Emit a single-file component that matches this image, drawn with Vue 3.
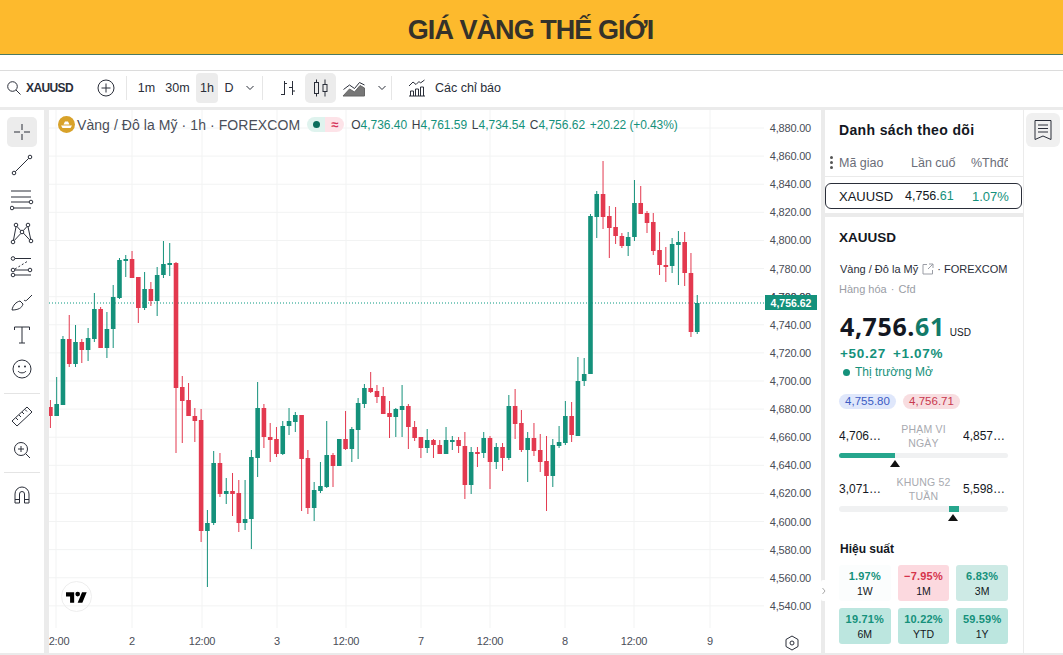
<script setup>
// [up, bodyTop, bodyBottom, wickTop, wickBottom]
const raw = [
  [0,407,416,400,428],[1,404,416,377,416],[1,339,405,336,405],[0,339,364,315,367],[1,342,364,325,367],
  [0,342,350,339,363],[1,338,350,328,361],[1,309,339,293,342],[0,309,348,307,348],[1,329,348,312,358],
  [1,297,329,285,348],[1,260,298,258,299],[1,259,261,255,277],[0,259,278,251,278],[0,277,308,277,323],
  [1,289,308,272,310],[0,289,301,282,306],[1,275,301,267,316],[1,264,275,241,278],[1,263,264,243,276],
  [0,263,388,262,453],[0,387,401,376,443],[0,400,416,383,416],[0,416,421,408,442],[0,420,531,409,542],
  [1,523,531,510,587],[1,463,523,451,525],[0,463,494,453,497],[1,491,494,478,504],[0,491,494,473,516],
  [0,493,523,480,532],[1,519,523,480,530],[1,457,519,450,549],[1,408,458,382,477],[0,408,437,404,448],
  [0,437,440,423,462],[0,439,454,427,457],[1,426,454,421,455],[1,421,426,408,435],[1,415,422,412,432],
  [0,415,459,415,511],[0,458,508,450,514],[1,490,508,482,521],[1,486,491,462,493],[1,455,487,421,488],
  [0,455,466,453,487],[1,439,466,439,466],[0,439,449,411,450],[1,429,449,427,462],[1,403,430,398,459],
  [1,388,404,384,408],[0,388,392,372,393],[0,391,397,385,403],[0,396,414,387,414],[0,413,417,401,438],
  [1,409,417,408,437],[1,406,410,385,437],[0,406,427,404,449],[0,427,438,421,441],[0,437,448,437,458],
  [1,440,448,429,453],[0,440,445,439,458],[0,445,454,440,454],[1,440,454,427,454],[1,440,441,436,450],
  [0,440,446,437,453],[0,446,485,432,499],[1,452,485,447,494],[0,452,454,447,467],[1,438,453,432,458],
  [0,438,462,436,489],[1,447,462,443,469],[0,447,458,443,471],[1,406,458,395,460],[0,406,424,389,439],
  [0,423,450,410,452],[1,438,450,432,482],[0,438,451,423,456],[0,450,462,434,472],[0,461,476,436,511],
  [1,445,476,439,487],[1,442,446,426,448],[1,416,443,401,445],[0,416,435,402,442],[1,381,436,357,436],
  [1,374,381,358,386],[1,216,374,214,374],[1,194,217,191,238],[0,194,217,161,229],[0,216,228,206,258],
  [0,227,236,207,244],[0,236,246,233,248],[1,237,246,232,256],[1,203,237,180,241],[0,203,214,186,214],
  [0,213,223,211,233],[0,222,251,213,255],[0,250,265,232,275],[0,265,266,247,282],[1,244,266,238,273],
  [1,242,245,231,285],[0,242,273,232,286],[0,273,332,253,337],[1,303,332,295,334]
]

// chart svg starts at x=49, y=110
const candles = raw.map((c, i) => ({
  x: 6.28 * i + 1.4,
  up: c[0] === 1,
  top: c[1] - 110,
  h: Math.max(c[2] - c[1], 2),
  wickTop: c[3] - 110,
  wickBottom: c[4] - 110
}))

const prices = []
for (let i = 0; i < 18; i++) {
  const value = 4880 - i * 20
  prices.push({ y: 18 + i * 28.11, label: value.toLocaleString('en-US') + '.00' })
}

const times = [
  { x: 7, label: '2:00' }, { x: 83, label: '2' }, { x: 153, label: '12:00' }, { x: 228, label: '3' },
  { x: 297, label: '12:00' }, { x: 372, label: '7' }, { x: 441, label: '12:00' }, { x: 516, label: '8' },
  { x: 585, label: '12:00' }, { x: 661, label: '9' }
]

const perf = [
  { v: '1.97%', p: '1W', c: 'p-none' }, { v: '−7.95%', p: '1M', c: 'p-red' }, { v: '6.83%', p: '3M', c: 'p-light' },
  { v: '19.71%', p: '6M', c: 'p-mid' }, { v: '10.22%', p: 'YTD', c: 'p-mid' }, { v: '59.59%', p: '1Y', c: 'p-mid' }
]
</script>

<template>
  <div class="page">
    <header class="banner">GIÁ VÀNG THẾ GIỚI</header>
    <div class="spacer"></div>

    <div class="toolbar">
      <svg class="ic search" width="16" height="16" viewBox="0 0 16 16"><circle cx="6.5" cy="6.5" r="4.8"/><path d="M10 10l4.5 4.5"/></svg>
      <span class="sym">XAUUSD</span>
      <svg class="ic plus" width="20" height="20" viewBox="0 0 20 20"><circle cx="10" cy="10" r="8"/><path d="M10 5.5v9M5.5 10h9"/></svg>
      <i class="sep s1"></i>
      <span class="tf t1">1m</span>
      <span class="tf t2">30m</span>
      <span class="tf t3">1h</span>
      <span class="tf t4">D</span>
      <svg class="ic chev c1" width="10" height="6" viewBox="0 0 10 6"><path d="M1.5 1l3.5 3.5L8.5 1"/></svg>
      <i class="sep s2"></i>
      <svg class="ic bars" width="18" height="20" viewBox="0 0 18 20"><path d="M6.500 3v14M3 16.500h3.500M6.500 5.500H9M14.500 3v14M11 9.500h3.500M14.500 13H17"/></svg>
      <span class="type-on">
        <svg class="ic" width="18" height="20" viewBox="0 0 18 20"><rect x="2.500" y="4.500" width="4" height="11"/><path d="M4.500 1.500v3M4.500 15.500v3M13 1.500v5M13 13.500v5"/><rect x="11" y="6.500" width="4" height="7"/></svg>
      </span>
      <svg class="ic area" width="24" height="20" viewBox="0 0 24 20"><path d="M1.500 11.500l6-4.500 5 3.500 5-6 5 2.500"/><path class="hatch" d="M1 18l6.500-7 5 3 5.500-6.500 4.500 2.500v8z"/></svg>
      <svg class="ic chev c2" width="10" height="6" viewBox="0 0 10 6"><path d="M1.500 1l3.500 3.500L8.500 1"/></svg>
      <i class="sep s3"></i>
      <svg class="ic indi" width="20" height="20" viewBox="0 0 20 20"><path d="M2 8l4-4 3 2.500 3-3 1.500 1.500 4-3"/><path d="M2 18h16M3.500 18v-5h3v5M8.500 18v-7h3v7M13.500 18v-9h3v9"/></svg>
      <span class="ind-label">Các chỉ báo</span>
    </div>

    <div class="body">
      <aside class="tools">
        <span class="tool on"><svg class="ic" width="24" height="24" viewBox="0 0 24 24"><path d="M12 4v6M12 14v6M4 12h6M14 12h6"/></svg></span>
        <span class="tool"><svg class="ic" width="24" height="24" viewBox="0 0 24 24"><circle cx="4" cy="20" r="1.800"/><circle cx="20" cy="4" r="1.800"/><path d="M5.300 18.700L18.700 5.300"/></svg></span>
        <span class="tool"><svg class="ic" width="24" height="24" viewBox="0 0 24 24"><path d="M1 4h20M1 10h20M1 15h18M4 21h17"/><circle cx="21" cy="15" r="1.800"/><circle cx="2" cy="21" r="1.800"/></svg></span>
        <span class="tool"><svg class="ic" width="24" height="24" viewBox="0 0 24 24"><circle cx="6" cy="4" r="1.800"/><circle cx="18" cy="4" r="1.800"/><circle cx="12" cy="11" r="1.800"/><circle cx="3" cy="21" r="1.800"/><circle cx="21" cy="20" r="1.800"/><path d="M7 5.500l3.800 4.200M17 5.500l-3.800 4.200M6 5.800L3.500 19M18 5.800l2.700 12.500M4.300 19.500l6.500-7M19.600 18.800l-6.300-6.800"/></svg></span>
        <span class="tool"><svg class="ic" width="24" height="24" viewBox="0 0 24 24"><circle cx="3" cy="3.500" r="1.800"/><circle cx="3" cy="15" r="1.800"/><circle cx="3" cy="20" r="1.800"/><circle cx="20" cy="15" r="1.800"/><path d="M5 3.500h16M5 20h16M5 15h13"/><path stroke-dasharray="2 2" d="M5 14l13-8"/></svg></span>
        <span class="tool"><svg class="ic" width="24" height="24" viewBox="0 0 24 24"><path d="M2 21c1-5 4-8 8-9l3 3c-1 4-5 6-11 6zM14 11c1 1 2 1 3 0l5-5"/></svg></span>
        <span class="tool"><svg class="ic" width="24" height="24" viewBox="0 0 24 24"><path d="M4.500 7V4h15v3M12 4v16M9 20h6"/></svg></span>
        <span class="tool"><svg class="ic" width="24" height="24" viewBox="0 0 24 24"><circle cx="12" cy="12" r="9"/><path d="M8 14c1.500 2.500 6.500 2.500 8 0"/><circle class="dot" cx="9" cy="9.500" r="1"/><circle class="dot" cx="15" cy="9.500" r="1"/></svg></span>
        <i class="tool-sep first"></i>
        <span class="tool"><svg class="ic" width="24" height="24" viewBox="0 0 24 24"><path d="M2 17L17 3l5 5L7 22zM6 14l2 2M9 11l2 2M12 8l2 2M15 5.500l2 2"/></svg></span>
        <span class="tool"><svg class="ic" width="24" height="24" viewBox="0 0 24 24"><circle cx="11" cy="11" r="6.500"/><path d="M11 8v6M8 11h6M15.800 15.800L20 20"/></svg></span>
        <i class="tool-sep"></i>
        <span class="tool"><svg class="ic" width="24" height="24" viewBox="0 0 24 24"><path d="M5 20V11a7 7 0 0 1 14 0v9h-4.500v-9a2.500 2.500 0 0 0-5 0v9zM5 16.500h4.500M14.500 16.500H19"/></svg></span>
      </aside>

      <main class="chart">
        <svg class="plot" width="772" height="543" viewBox="0 0 772 543">
          <g class="grid">
            <line v-for="p in prices" :key="p.y" x1="0" x2="715" :y1="p.y" :y2="p.y"/>
            <line v-for="t in times" :key="t.x" :x1="t.x" :x2="t.x" y1="0" y2="518"/>
          </g>
          <line class="last" x1="0" x2="716" y1="193" y2="193"/>
          <g v-for="(c, i) in candles" :key="i" :class="c.up ? 'up' : 'down'">
            <line :x1="c.x" :x2="c.x" :y1="c.wickTop" :y2="c.wickBottom"/>
            <rect :x="c.x - 2.300" :y="c.top" width="4.600" :height="c.h"/>
          </g>
          <text v-for="p in prices" :key="p.label" class="tick" x="762" text-anchor="end" :y="p.y + 4">{{ p.label }}</text>
          <text class="tick" x="762" text-anchor="end" y="191">4,760.00</text>
          <rect class="tag" x="716" y="185" width="52" height="15"/>
          <text class="tag-text" x="742" y="196.500" text-anchor="middle">4,756.62</text>
          <text v-for="t in times" :key="t.label + t.x" class="tick" :x="t.x + (t.label === '2:00' ? 3 : 0)" y="535" text-anchor="middle">{{ t.label }}</text>
          <g class="ic" transform="translate(736 525)">
            <path d="M7 1l6 3.500v7L7 15l-6-3.500v-7z"/><circle cx="7" cy="8" r="2"/>
          </g>
        </svg>

        <div class="legend">
          <svg width="17" height="17" viewBox="0 0 17 17"><circle cx="8.500" cy="8.500" r="8.500" fill="#d8a22a"/><path d="M3 9.500h11l-1.500 2.500h-8zM5.500 8.500l1.500-3h3l1.500 3z" fill="#fff"/></svg>
          <span class="l-name">Vàng / Đô la Mỹ · 1h · FOREXCOM</span>
          <span class="status"><b class="s-dot"></b><b class="s-eq">≈</b></span>
          <span class="ohlc">O<em>4,736.40</em></span>
          <span class="ohlc">H<em>4,761.59</em></span>
          <span class="ohlc">L<em>4,734.54</em></span>
          <span class="ohlc">C<em>4,756.62</em></span>
          <span class="ohlc change"><em>+20.22 (+0.43%)</em></span>
        </div>

        <div class="tv-logo">
          <svg width="21" height="14" viewBox="0 0 36 24"><path d="M14 22H7V11H0V4h14v18zM28 22h-8l7.500-18h8L28 22z"/><circle cx="20" cy="7" r="4"/></svg>
        </div>
        <div class="collapse"><svg class="ic" width="4" height="8" viewBox="0 0 4 8"><path d="M.5 1l2.500 3L.5 7"/></svg></div>
      </main>

      <section class="side">
        <div class="card watch">
          <h2>Danh sách theo dõi</h2>
          <div class="wl-head">
            <span class="dots"><i></i><i></i><i></i></span>
            <span class="wh1">Mã giao</span><span class="wh2">Lần cuối</span><span class="wh3">%Thđổi</span>
          </div>
          <div class="wl-row">
            <span class="wr1">XAUUSD</span>
            <span class="wr2">4,756.<em>61</em></span>
            <span class="wr3">1.07%</span>
          </div>
        </div>

        <div class="card detail">
          <h3>XAUUSD</h3>
          <div class="d-name">
            <span>Vàng / Đô la Mỹ</span>
            <svg class="ext" width="12" height="12" viewBox="0 0 12 12"><path d="M5 1.500H1v9.500h9.500V7M7 1h4v4M11 1L6 6"/></svg>
            <span class="d-dot">·</span>
            <span>FOREXCOM</span>
          </div>
          <div class="d-type">Hàng hóa <span>·</span> Cfd</div>
          <div class="d-price">4,756.<em>61</em><small>USD</small></div>
          <div class="d-change">+50.27<span>+1.07%</span></div>
          <div class="d-open"><i></i>Thị trường Mở</div>
          <div class="pills"><span class="bid">4,755.80</span><span class="ask">4,756.71</span></div>

          <div class="range">
            <span class="r-val">4,706.61</span>
            <span class="r-label">PHẠM VI NGÀY</span>
            <span class="r-val">4,857.50</span>
          </div>
          <div class="bar"><i class="fill day"></i></div>
          <div class="tri-row"><i class="tri day"></i></div>

          <div class="range r2">
            <span class="r-val">3,071.02</span>
            <span class="r-label">KHUNG 52 TUẦN</span>
            <span class="r-val">5,598.75</span>
          </div>
          <div class="bar tall"><i class="fill year"></i></div>
          <div class="tri-row"><i class="tri year"></i></div>

          <h4>Hiệu suất</h4>
          <div class="perf">
            <div v-for="item in perf" :key="item.p" class="perf-item" :class="item.c">
              <b>{{ item.v }}</b>
              <span>{{ item.p }}</span>
            </div>
          </div>
        </div>
      </section>

      <aside class="rail">
        <span class="rail-btn">
          <svg class="ic" width="20" height="22" viewBox="0 0 20 22"><path d="M2 1.500h16v19l-8-3.500-8 3.500zM5 6h10M5 9.500h10M5 13h10"/></svg>
        </span>
      </aside>
    </div>
  </div>
</template>

<style scoped>
.page {
  width: 1063px;
  height: 655px;
  display: flex;
  flex-direction: column;
  overflow: hidden;
  font-family: "Liberation Sans", Arial, sans-serif;
  color: #131722;
  background: #fff;
}
.banner {
  height: 55px;
  flex: none;
  box-sizing: border-box;
  background: #fdba2d;
  border-bottom: 1px solid #4c7a62;
  text-align: center;
  line-height: 60px;
  font-size: 27px;
  font-weight: 700;
  letter-spacing: -0.95px;
  color: #35322a;
  padding-right: 2px;
}
.spacer {
  height: 15px;
  flex: none;
  border-bottom: 1px solid #dcdcdc;
}
.ic {
  fill: none;
  stroke: #2a2e39;
  stroke-width: 1;
}
.ic .dot {
  fill: #2a2e39;
  stroke: none;
}
.toolbar {
  height: 36px;
  flex: none;
  box-sizing: border-box;
  padding-bottom: 3px;
  display: flex;
  align-items: center;
  font-size: 12.5px;
  color: #2a2e39;
}
.search { margin-left: 6px; }
.sym {
  margin-left: 4px;
  font-size: 12px;
  font-weight: 700;
  letter-spacing: -0.6px;
  width: 70px;
}
.plus { margin-right: 10px; }
.sep {
  width: 1px;
  height: 24px;
  background: #e6e6e6;
}
.tf {
  font-size: 12.5px;
  text-align: center;
}
.t1 { margin-left: 10px; width: 19px; }
.t2 { margin-left: 9px; width: 25px; }
.t3 {
  margin-left: 6px;
  width: 22px;
  height: 30px;
  line-height: 30px;
  background: #ececec;
  border-radius: 4px;
}
.t4 { margin-left: 6px; width: 10px; }
.c1 { margin-left: 11px; }
.s2 { margin-left: 7px; }
.bars { margin-left: 15px; }
.type-on {
  margin-left: 9px;
  width: 31px;
  height: 30px;
  background: #ececec;
  border-radius: 5px;
  display: flex;
  align-items: center;
  justify-content: center;
}
.area { margin-left: 6px; }
.hatch {
  fill: #777;
  stroke: #666;
}
.c2 { margin-left: 11px; }
.s3 { margin-left: 4px; }
.indi { margin-left: 15px; }
.ind-label {
  margin-left: 8px;
  font-size: 12.5px;
}

.body {
  flex: 1;
  min-height: 0;
  display: flex;
  background: #ebebeb;
  padding: 3px 0 2px;
}
.tools {
  width: 44px;
  flex: none;
  background: #fff;
  display: flex;
  flex-direction: column;
  align-items: center;
  padding-top: 4px;
  margin-right: 5px;
}
.tool {
  width: 30px;
  height: 34px;
  display: flex;
  align-items: center;
  justify-content: center;
  flex: none;
}
.tool.on {
  background: #ececec;
  border-radius: 5px;
  height: 30px;
  margin: 3px 0 1px;
}
.tool-sep {
  width: 36px;
  height: 1px;
  background: #e4e4e4;
  margin: 5px 0 5px;
  flex: none;
}
.tool-sep.first { margin-top: 7px; margin-bottom: 5px; }

.chart {
  width: 772px;
  flex: none;
  background: #fff;
  position: relative;
}
.plot { display: block; }
.grid line {
  stroke: #f2f3f3;
  stroke-width: 1;
}
.last {
  stroke: #089981;
  stroke-width: 1;
  stroke-dasharray: 1 2;
}
.up line { stroke: #14917b; }
.up rect { fill: #14917b; }
.down line { stroke: #e3394f; }
.down rect { fill: #e3394f; }
.tick {
  font-size: 11px;
  letter-spacing: -0.2px;
  fill: #4a4e58;
  font-family: "Liberation Sans", Arial, sans-serif;
}
.tag { fill: #14917b; }
.tag-text {
  font-size: 10.5px;
  font-weight: 700;
  fill: #fff;
}
.legend {
  position: absolute;
  left: 9px;
  top: 6px;
  display: flex;
  align-items: center;
  height: 17px;
  white-space: nowrap;
}
.l-name {
  margin-left: 2px;
  font-size: 14px;
  letter-spacing: 0.07px;
  color: #4a4e58;
}
.status {
  margin-left: 7px;
  margin-right: 7px;
  width: 37px;
  height: 15px;
  border-radius: 8px;
  background: linear-gradient(to right, #dff3ee 50%, #fde3e8 50%);
  display: flex;
  align-items: center;
  justify-content: space-around;
}
.s-dot {
  width: 7px;
  height: 7px;
  border-radius: 50%;
  background: #0b6e5c;
}
.s-eq {
  color: #d5335a;
  font-size: 13px;
}
.ohlc {
  font-size: 12px;
  color: #3a3e48;
  margin-right: 4.600px;
}
.ohlc.change { letter-spacing: -0.1px; }
.ohlc em {
  font-style: normal;
  color: #14917b;
}
.tv-logo {
  position: absolute;
  left: 12px;
  bottom: 41px;
  width: 29px;
  height: 29px;
  border-radius: 50%;
  border: 1px solid #eee;
  display: flex;
  align-items: center;
  justify-content: center;
}
.collapse {
  position: absolute;
  right: -6px;
  top: 470px;
  width: 6px;
  height: 21px;
  background: #fff;
  border-radius: 2px;
  display: flex;
  align-items: center;
  justify-content: center;
}
.collapse .ic { stroke: #aaa; }

.side {
  width: 198px;
  margin-left: 4px;
  flex: none;
  display: flex;
  flex-direction: column;
  gap: 4px;
}
.card { background: #fff; }
.watch {
  height: 103px;
  flex: none;
  box-sizing: border-box;
  position: relative;
}
h2 {
  margin: 0;
  padding: 12px 0 0 14px;
  font-size: 14px;
  line-height: 16px;
  letter-spacing: 0.35px;
  font-weight: 700;
}
.wl-head {
  margin-top: 17px;
  height: 16px;
  display: flex;
  align-items: center;
  font-size: 12.5px;
  color: #6a6d78;
  border-bottom: 1px solid #eaeaea;
  padding-bottom: 5px;
  position: relative;
  white-space: nowrap;
}
.dots {
  position: absolute;
  left: 5px;
  top: 1px;
  display: flex;
  flex-direction: column;
  gap: 2px;
}
.dots i {
  width: 3px;
  height: 3px;
  border-radius: 50%;
  background: #555;
}
.wh1 { margin-left: 14px; width: 72px; }
.wh2 { width: 45px; overflow: hidden; }
.wh3 { margin-left: 15px; width: 37px; overflow: hidden; }
.wl-row {
  margin-top: 6px;
  height: 26px;
  box-sizing: border-box;
  border: 1px solid #2a2e39;
  border-radius: 6px;
  display: flex;
  align-items: center;
  font-size: 13px;
  width: 197px;
}
.wr1 { margin-left: 13px; width: 66px; }
.wr2 { width: 67px; font-size: 12.500px; }
.wr2 em { font-style: normal; color: #14917b; }
.wr3 { color: #14917b; font-size: 13px; }

.detail {
  flex: 1;
  min-height: 0;
  box-sizing: border-box;
  padding: 14px 15px 0 14px;
}
h3 {
  margin: 0;
  font-size: 13.500px;
  line-height: 14px;
  font-weight: 700;
}
.d-name {
  margin-top: 17px;
  padding-left: 1px;
  display: flex;
  align-items: center;
  font-size: 11px;
  line-height: 14px;
  white-space: nowrap;
  color: #2a2e39;
}
.ext {
  margin-left: 4px;
  flex: none;
  fill: none;
  stroke: #9a9da5;
  stroke-width: 1;
}
.d-dot { margin: 0 3px; }
.d-type {
  margin-top: 6px;
  font-size: 11px;
  line-height: 14px;
  color: #9a9da5;
}
.d-type span { margin: 0 1px; }
.d-price {
  margin-top: 16px;
  padding-left: 1px;
  font-family: "Open Sans", sans-serif;
  font-size: 25px;
  line-height: 28px;
  font-weight: 700;
  letter-spacing: 0.6px;
  white-space: nowrap;
}
.d-price em {
  font-style: normal;
  color: #127a69;
}
.d-price small {
  margin-left: 5px;
  font-family: "Liberation Sans", Arial, sans-serif;
  font-size: 10px;
  font-weight: 400;
  letter-spacing: 0;
}
.d-change {
  margin-top: -1px;
  padding-left: 1px;
  font-size: 13.500px;
  line-height: 16px;
  font-weight: 700;
  color: #14917b;
  letter-spacing: 0.7px;
  white-space: nowrap;
}
.d-change span { margin-left: 7px; }
.d-open {
  margin-top: 2px;
  padding-left: 4px;
  font-size: 12px;
  line-height: 16px;
  color: #14917b;
  display: flex;
  align-items: center;
}
.d-open i {
  width: 7px;
  height: 7px;
  border-radius: 50%;
  background: #14917b;
  margin-right: 5px;
}
.pills {
  margin-top: 14px;
  display: flex;
  gap: 7px;
  font-size: 11.500px;
}
.pills span {
  height: 15px;
  line-height: 15px;
  width: 57px;
  text-align: center;
  border-radius: 8px;
}
.bid { background: #dfe7fb; color: #3c5cc4; }
.ask { background: #f8dde0; color: #c8384e; }
.range {
  margin-top: 12px;
  display: grid;
  grid-template-columns: 45px 1fr 45px;
  align-items: center;
  height: 30px;
}
.range.r2 { margin-top: 5px; }
.r-val {
  font-size: 12px;
  white-space: nowrap;
  overflow: hidden;
  text-overflow: ellipsis;
}
.r-label {
  font-size: 10.500px;
  line-height: 14.500px;
  letter-spacing: 0.2px;
  text-align: center;
  color: #a8aab0;
  padding: 0 6px;
}
.bar {
  margin-top: 2px;
  height: 5px;
  border-radius: 3px;
  background: #f0f1f2;
  position: relative;
}
.bar.tall { height: 6px; }
.fill {
  position: absolute;
  top: 0;
  bottom: 0;
  background: #26a68d;
}
.fill.day { left: 0; width: 56px; border-radius: 3px 0 0 3px; }
.fill.year { left: 110px; width: 10px; }
.tri-row {
  height: 9px;
  margin-top: 2px;
  position: relative;
}
.tri {
  position: absolute;
  top: 0;
  width: 0;
  height: 0;
  border-left: 5px solid transparent;
  border-right: 5px solid transparent;
  border-bottom: 7px solid #111;
}
.tri.day { left: 51px; }
.tri.year { left: 109px; }
h4 {
  margin: 18px 0 0;
  padding-left: 1px;
  font-size: 12px;
  line-height: 16px;
  font-weight: 700;
}
.perf {
  margin-top: 8px;
  display: grid;
  grid-template-columns: repeat(3, 1fr);
  gap: 7px 7px;
}
.perf-item {
  height: 36px;
  box-sizing: border-box;
  padding-top: 2px;
  border-radius: 3px;
  display: flex;
  flex-direction: column;
  align-items: center;
  justify-content: center;
  font-size: 10.500px;
  line-height: 15px;
}
.perf-item b {
  font-size: 11px;
  color: #14917b;
  letter-spacing: 0.2px;
}
.p-none { background: #fbfdfd; }
.p-red { background: #fcd9df; }
.p-red b { color: #d5334b; }
.p-light { background: #cdeae5; }
.p-mid { background: #bce6df; }

.rail {
  flex: 1;
  background: #fff;
  margin-left: 1px;
  padding: 3px 3px 0 2px;
}
.rail-btn {
  width: 34px;
  height: 34px;
  display: flex;
  align-items: center;
  justify-content: center;
  background: #f0f0f0;
  border-radius: 6px;
}
</style>

<style>
html, body { margin: 0; background: #fff; }
</style>
